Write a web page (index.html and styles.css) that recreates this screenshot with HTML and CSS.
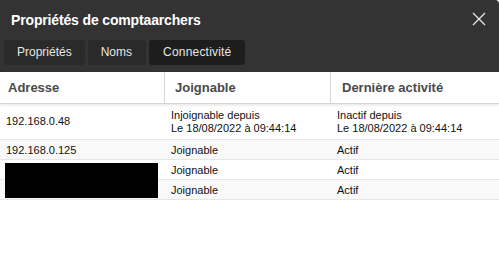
FILE: index.html
```html
<!DOCTYPE html>
<html lang="fr">
<head>
    <meta charset="UTF-8">
    <title>Propriétés de comptaarchers</title>
    <link rel="stylesheet" href="styles.css">
</head>
<body>
    <div class="dialog">
        <div class="dialog-head">
            <div class="title-bar">
                <h1>Propriétés de comptaarchers</h1>
                <span class="close">
                    <svg width="14" height="14" viewBox="0 0 14 14"><path d="M1 1 L13 13 M13 1 L1 13" stroke="#e8e8e8" stroke-width="1.3"/></svg>
                </span>
            </div>
            <div class="tabs">
                <div class="tab">Propriétés</div>
                <div class="tab noms">Noms</div>
                <div class="tab active">Connectivité</div>
            </div>
        </div>

        <div class="grid">
            <div class="row head">
                <div class="cell">Adresse</div>
                <div class="cell">Joignable</div>
                <div class="cell">Dernière activité</div>
            </div>
            <div class="row tall">
                <div class="cell">192.168.0.48</div>
                <div class="cell">Injoignable depuis<br>Le 18/08/2022 à 09:44:14</div>
                <div class="cell">Inactif depuis<br>Le 18/08/2022 à 09:44:14</div>
            </div>
            <div class="row odd">
                <div class="cell">192.168.0.125</div>
                <div class="cell">Joignable</div>
                <div class="cell">Actif</div>
            </div>
            <div class="row">
                <div class="cell masked"><div class="redact"></div></div>
                <div class="cell">Joignable</div>
                <div class="cell">Actif</div>
            </div>
            <div class="row odd">
                <div class="cell"></div>
                <div class="cell">Joignable</div>
                <div class="cell">Actif</div>
            </div>
        </div>
    </div>
</body>
</html>
```

FILE: styles.css
```css
body {
    margin: 0;
    background: #fff;
    font-family: Tahoma, 'Liberation Sans', Arial, sans-serif;
}

.dialog {
    width: 499px;
    height: 274px;
    background: #fff;
    overflow: hidden;
    border-top-right-radius: 4px;
}

.dialog-head {
    background: #333;
    height: 72px;
    box-sizing: border-box;
    padding: 0 4px;
}

.title-bar {
    height: 38px;
    display: flex;
    align-items: center;
    justify-content: space-between;
    padding: 0 7px 0 7px;
}

h1 {
    margin: 0;
    color: #fff;
    font-size: 14px;
    font-weight: bold;
    letter-spacing: -0.15px;
    padding-top: 1px;
}

.close {
    display: flex;
    margin-right: 2px;
}

.tabs {
    display: flex;
    gap: 3px;
    margin-top: 2px;
}

.tab {
    height: 25px;
    line-height: 25px;
    padding: 0 13px;
    background: #2a2a2a;
    color: #e6e6e6;
    font-size: 12px;
    border-radius: 3px;
}

.tab.noms {
    padding: 0 14px 0 13px;
}

.tab.active {
    background: #1d1d1d;
    padding: 0 14px;
    letter-spacing: 0.2px;
}

.row {
    display: grid;
    grid-template-columns: 165px 166px 1fr;
    height: 20px;
    border-bottom: 1px solid #e6e6e6;
    font-size: 11px;
    color: #111;
    line-height: 13px;
    box-sizing: border-box;
}

.row .cell {
    padding: 4px 6px 0 6px;
}

.row.odd {
    background: #f9f9f9;
}

.row.tall {
    height: 36px;
}

.row.tall .cell {
    padding-top: 5px;
}

.row.tall .cell:first-child {
    padding-top: 11px;
}

.row.head {
    height: 32px;
    border-bottom: 1px solid #d6d6d6;
    box-shadow: 0 1px 3px rgba(0,0,0,0.12);
    font-size: 13px;
    font-weight: bold;
    color: #4a4a4a;
    line-height: 31px;
}

.row.head .cell {
    padding: 0 0 0 10px;
    border-right: 1px solid #d6d6d6;
}

.row.head .cell:first-child {
    padding-left: 8px;
}

.row.head .cell:last-child {
    border-right: none;
    padding-left: 11px;
}

.masked {
    position: relative;
}

.redact {
    position: absolute;
    left: 5px;
    top: 3px;
    width: 153px;
    height: 35px;
    background: #000;
}
```
